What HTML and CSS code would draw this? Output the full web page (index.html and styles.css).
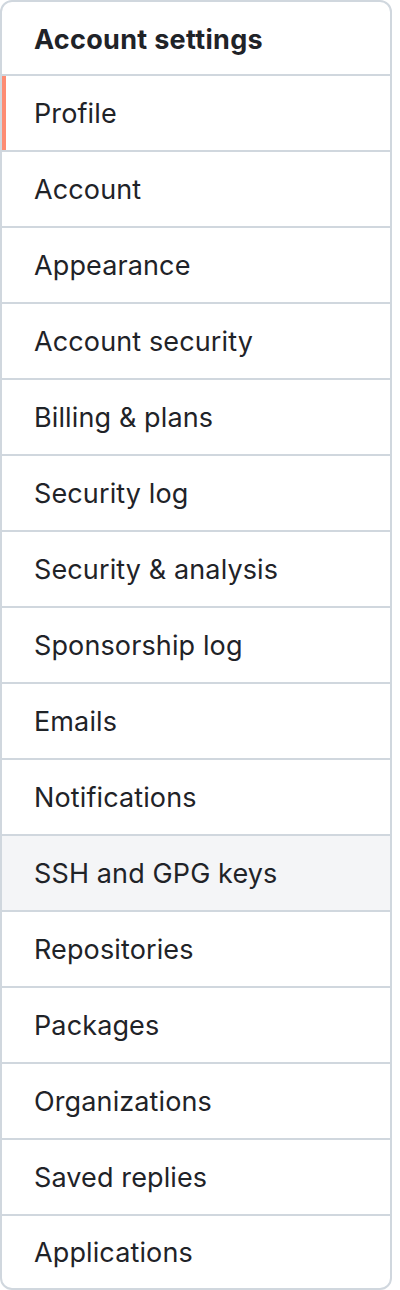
FILE: index.html
```html
<!DOCTYPE html>
<html lang="en">
<head>
<meta charset="utf-8">
<link rel="stylesheet" href="styles.css">
</head>
<body>
<nav class="menu">
  <div class="menu-heading">Account settings</div>
  <a class="menu-item selected">Profile</a>
  <a class="menu-item">Account</a>
  <a class="menu-item">Appearance</a>
  <a class="menu-item">Account security</a>
  <a class="menu-item">Billing &amp; plans</a>
  <a class="menu-item">Security log</a>
  <a class="menu-item">Security &amp; analysis</a>
  <a class="menu-item">Sponsorship log</a>
  <a class="menu-item">Emails</a>
  <a class="menu-item">Notifications</a>
  <a class="menu-item hover">SSH and GPG keys</a>
  <a class="menu-item">Repositories</a>
  <a class="menu-item">Packages</a>
  <a class="menu-item">Organizations</a>
  <a class="menu-item">Saved replies</a>
  <a class="menu-item last">Applications</a>
</nav>
</body>
</html>
```
FILE: styles.css
```css
html, body {
  margin: 0;
  padding: 0;
  background: #ffffff;
}
body {
  font-family: Inter, "Liberation Sans", sans-serif;
  color: #1f2328;
}
.menu {
  width: 388px;
  border: 2px solid #d0d7de;
  border-radius: 12px;
  overflow: hidden;
  display: flex;
  flex-direction: column;
}
.menu-heading {
  height: 72px;
  box-sizing: border-box;
  padding-top: 2px;
  display: flex;
  align-items: center;
  padding-left: 32px;
  font-size: 27px;
  font-weight: 700;
  letter-spacing: 0.3px;
}
.menu-item {
  position: relative;
  height: 74px;
  box-sizing: content-box;
  display: flex;
  align-items: center;
  padding-left: 32px;
  border-top: 2px solid #d0d7de;
  font-size: 27px;
  font-weight: 400;
  letter-spacing: 0.12px;
  color: #1f2328;
  text-decoration: none;
}
.menu-item > * {
  display: none;
}
.menu-item.last {
  height: 72px;
}
.menu-item.hover {
  background: #f4f5f7;
}
.menu-item.selected::before {
  content: "";
  position: absolute;
  left: 0;
  top: 0;
  bottom: 0;
  width: 4px;
  background: #fd8c73;
}
```
